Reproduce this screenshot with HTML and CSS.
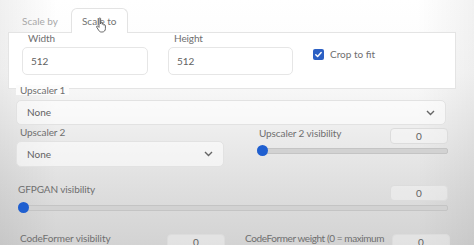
FILE: index.html
```html
<!DOCTYPE html>
<html lang="en">
<head>
    <meta charset="UTF-8">
    <title>Scale to</title>
    <link rel="stylesheet" href="styles.css">
</head>
<body>
    <div class="screen">
        <div class="tabs">
            <button class="tab">Scale by</button>
            <button class="tab tab-active">Scale to</button>
        </div>

        <div class="panel">
            <div class="field field-w">
                <span class="label">Width</span>
                <div class="input">512</div>
            </div>
            <div class="field field-h">
                <span class="label">Height</span>
                <div class="input">512</div>
            </div>
            <label class="check">
                <span class="box">
                    <svg width="9" height="9" viewBox="0 0 10 10"><path d="M2 5.2l2 2 4-4.4" fill="none" stroke="#fff" stroke-width="1.6" stroke-linecap="round" stroke-linejoin="round"/></svg>
                </span>
                Crop to fit
            </label>
        </div>

        <div class="block">
            <span class="label legend">Upscaler 1</span>
            <div class="select select-wide">
                None
                <svg class="chev" width="9" height="6" viewBox="0 0 9 6"><path d="M1 1l3.5 3.5L8 1" fill="none" stroke="#666" stroke-width="1.4"/></svg>
            </div>
        </div>

        <div class="row">
            <div class="col-left">
                <span class="label">Upscaler 2</span>
                <div class="select">
                    None
                    <svg class="chev" width="9" height="6" viewBox="0 0 9 6"><path d="M1 1l3.5 3.5L8 1" fill="none" stroke="#666" stroke-width="1.4"/></svg>
                </div>
            </div>
            <div class="col-right">
                <div class="slider-head">
                    <span class="label">Upscaler 2 visibility</span>
                    <div class="num">0</div>
                </div>
                <div class="track"><span class="thumb"></span></div>
            </div>
        </div>

        <div class="gfp">
            <div class="slider-head">
                <span class="label">GFPGAN visibility</span>
                <div class="num">0</div>
            </div>
            <div class="track"><span class="thumb"></span></div>
        </div>

        <div class="code">
            <div class="code-col">
                <span class="label">CodeFormer visibility</span>
                <div class="num">0</div>
            </div>
            <div class="code-col code-right">
                <span class="label">CodeFormer weight (0 = maximum</span>
                <div class="num">0</div>
            </div>
        </div>

        <svg class="cursor" width="14" height="16" viewBox="0 0 14 16">
            <path d="M4 1.5c0-.7 1.6-.7 1.6 0V7l.3-1.2c.2-.7 1.5-.6 1.5.1v1.4c.2-.7 1.5-.7 1.5 0v1c.3-.6 1.5-.5 1.5.2v3.2c0 1.8-1.2 3.3-3.2 3.3H6.3c-1.2 0-1.9-.6-2.5-1.5L1.6 10c-.4-.7.6-1.4 1.2-.8L4 10.4z" fill="#fff" stroke="#555" stroke-width="0.9" stroke-linejoin="round"/>
        </svg>
    </div>
</body>
</html>
```

FILE: styles.css
```css
body {
    margin: 0;
    font-family: 'Lato', 'Open Sans', sans-serif;
    background: #fff;
}

.screen {
    position: relative;
    width: 474px;
    height: 245px;
    overflow: hidden;
    box-sizing: border-box;
    padding-top: 8px;
    background:
        linear-gradient(to right, rgba(0, 0, 0, 0.06), rgba(0, 0, 0, 0) 12%, rgba(0, 0, 0, 0) 88%, rgba(0, 0, 0, 0.05)),
        linear-gradient(to bottom, #ffffff 0%, #fbfbfb 30%, #ececec 55%, #dedede 78%, #d3d3d3 100%);
    color: #707070;
    font-size: 10px;
}

.label {
    display: block;
    font-size: 10px;
    line-height: 10px;
    color: #6f6f6f;
    letter-spacing: -0.1px;
    white-space: nowrap;
}

/* tabs */
.tabs {
    display: flex;
    padding-left: 14px;
    height: 24px;
}

.tab {
    font-family: inherit;
    font-size: 10px;
    color: #a8a8a8;
    background: none;
    border: 1px solid transparent;
    border-bottom: none;
    padding: 0 6px 0 7px;
    height: 25px;
    margin-right: 6px;
    cursor: pointer;
}

.tab-active {
    color: #737373;
    background: #fff;
    border-color: #e3e3e3;
    border-radius: 6px 6px 0 0;
    padding: 0 10px;
    position: relative;
    z-index: 1;
}

/* image size panel */
.panel {
    margin-left: 8px;
    width: 448px;
    height: 57px;
    box-sizing: border-box;
    border: 1px solid #e4e4e4;
    background: #fff;
    display: flex;
    align-items: flex-start;
}

.field {
    display: flex;
    flex-direction: column;
    gap: 4px;
}

.field .label {
    padding-left: 6px;
}

.field-w {
    margin-left: 13px;
    width: 126px;
}

.field-h {
    margin-left: 20px;
    width: 125px;
}

.input {
    height: 28px;
    box-sizing: border-box;
    border: 1px solid #e6e6e6;
    border-radius: 5px;
    background: #fff;
    padding-left: 8px;
    line-height: 26px;
    color: #626262;
    font-size: 10px;
}

.check {
    display: flex;
    align-items: center;
    gap: 6px;
    margin-left: 20px;
    margin-top: 15px;
    color: #6f6f6f;
    font-size: 10px;
}

.box {
    width: 11px;
    height: 11px;
    border-radius: 2px;
    background: #2c60c4;
    display: flex;
    align-items: center;
    justify-content: center;
}

/* upscalers */
.block {
    padding-left: 16px;
    width: 430px;
}

.legend {
    width: fit-content;
    margin-top: -4px;
    padding: 0 4px;
    background: #fcfcfc;
    position: relative;
}

.select {
    position: relative;
    height: 26px;
    box-sizing: border-box;
    border: 1px solid #e2e2e2;
    border-radius: 5px;
    background: rgba(255, 255, 255, 0.55);
    padding-left: 10px;
    line-height: 24px;
    color: #626262;
    font-size: 10px;
    margin-top: 4px;
}

.select-wide {
    height: 25px;
    line-height: 23px;
    margin-top: 5px;
}

.chev {
    position: absolute;
    right: 10px;
    top: 9px;
}

.row {
    display: flex;
    padding-left: 16px;
}

.col-left {
    width: 208px;
    padding-top: 2px;
}

.col-left .label {
    padding-left: 4px;
}

.col-right {
    margin-left: 33px;
    width: 191px;
    padding-top: 3px;
}

.slider-head {
    display: flex;
    justify-content: space-between;
    align-items: flex-start;
}

.col-right .slider-head .label {
    margin-left: 2px;
}

.num {
    flex-shrink: 0;
    width: 58px;
    height: 16px;
    box-sizing: border-box;
    border: 1px solid #dcdcdc;
    border-radius: 4px;
    background: rgba(255, 255, 255, 0.35);
    text-align: center;
    line-height: 14px;
    font-size: 10px;
    color: #626262;
}

.track {
    position: relative;
    height: 4px;
    border-radius: 2px;
    background: #d2d2d2;
    border: 1px solid #c4c4c4;
    margin-top: 4px;
}

.thumb {
    position: absolute;
    left: -1px;
    top: -4px;
    width: 11px;
    height: 11px;
    border-radius: 50%;
    background: #1f5fd0;
}

.gfp {
    margin-top: 17px;
    width: 430px;
    padding-left: 18px;
}

.gfp .slider-head .num {
    margin-top: 1px;
}

.code {
    display: flex;
    margin-top: 22px;
    padding-left: 20px;
}

.code-col {
    display: flex;
    justify-content: space-between;
    align-items: flex-start;
    width: 205px;
}

.code-col .num {
    margin-top: 1px;
    margin-left: 2px;
    height: 20px;
}

.code-right {
    margin-left: 20px;
}

.code-right .label {
    letter-spacing: -0.4px;
}

.cursor {
    position: absolute;
    left: 95px;
    top: 17px;
    z-index: 2;
}
```
